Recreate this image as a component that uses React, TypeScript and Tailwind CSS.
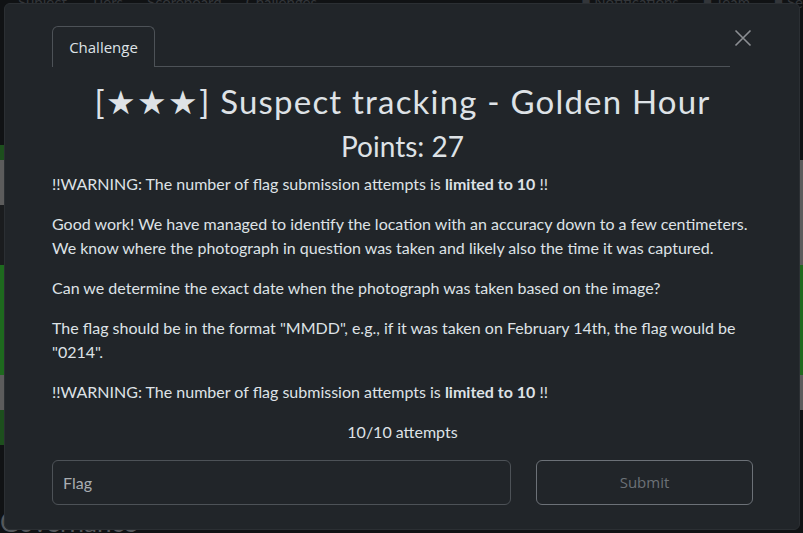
import React from 'react'

const paragraphs = [
    'Good work! We have managed to identify the location with an accuracy down to a few centimeters. We know where the photograph in question was taken and likely also the time it was captured.',
    'Can we determine the exact date when the photograph was taken based on the image?',
    'The flag should be in the format "MMDD", e.g., if it was taken on February 14th, the flag would be "0214".',
]

const Warning = () => (
    <p className="mb-4">
        !!WARNING: The number of flag submission attempts is <b className="font-bold">limited to 10</b> !!
    </p>
)

const App = () => {
    return (
        <div className="relative w-[803px] h-[533px] overflow-hidden bg-[#101214] font-['Lato',sans-serif]">
            {/* page behind the modal */}
            <div className="flex gap-6 pl-[18px] -mt-[9px] text-[15px] text-[#33363a]">
                <span>Subject</span>
                <span>Tiers</span>
                <span>Scoreboard</span>
                <span>Challenges</span>
                <span className="ml-auto">■ Notifications</span>
                <span>■ Team</span>
                <span>■ Se</span>
            </div>
            <div className="absolute left-0 top-[145px] w-[4px] flex flex-col">
                <div className="h-[15px] bg-[#1d4f1d]" />
                <div className="h-[45px] bg-[#5c5c5c]" />
                <div className="h-[60px] bg-[#1a1c1e]" />
                <div className="h-[110px] bg-[#1e6a1e]" />
                <div className="h-[35px] bg-[#5c5c5c]" />
                <div className="h-[35px] bg-[#1d4f1d]" />
            </div>
            <div className="absolute right-0 top-[160px] w-[3px] flex flex-col">
                <div className="h-[105px] bg-[#5c5c5c]" />
                <div className="h-[110px] bg-[#1e6a1e]" />
                <div className="h-[35px] bg-[#5c5c5c]" />
            </div>
            <div className="absolute left-0 top-[503px] text-[26px] text-[#55585c]">Governance</div>

            {/* modal */}
            <div className="absolute left-[4px] top-[3px] w-[796px] h-[527px] bg-[#212529] rounded-[6px] border border-[#2b2f33] pl-[47px] pr-[46px] pt-[22px] text-[#dee2e6]">
                <div className="flex items-start">
                    <div className="flex-1 flex border-b border-[#4d5257]">
                        <div className="h-[41px] w-[103px] flex items-center justify-center border border-b-0 border-[#4d5257] rounded-t-[6px] font-['Open_Sans',sans-serif] text-[15px] -mb-px bg-[#212529]">
                            Challenge
                        </div>
                    </div>
                    <button className="ml-[3px] mt-[2px] w-[20px] h-[20px] flex items-center justify-center text-[#8c8f93]">
                        <svg width="18" height="18" viewBox="0 0 18 18" fill="none" stroke="currentColor" strokeWidth="1.6">
                            <path d="M1.5 1.5 L16.5 16.5 M16.5 1.5 L1.5 16.5" />
                        </svg>
                    </button>
                </div>

                <h1 className="mt-[15px] text-center text-[33px] leading-[38px] tracking-[1.2px]">
                    [★★★] Suspect tracking - Golden Hour
                </h1>
                <h2 className="mt-[9px] text-center text-[28px] leading-[34px]">Points: 27</h2>

                <div className="mt-[9px] text-[16px] leading-[24px]">
                    <Warning />
                    {paragraphs.map((p, i) => (
                        <p key={i} className="mb-4">{p}</p>
                    ))}
                    <Warning />
                    <p className="text-center">10/10 attempts</p>
                </div>

                <div className="mt-4 grid grid-cols-[459px_217px] gap-[25px]">
                    <input
                        placeholder="Flag"
                        className="h-[45px] px-[10px] bg-transparent border border-[#4d5257] rounded-[6px] text-[16px] placeholder:text-[#a9adb1] outline-none"
                    />
                    <button className="h-[45px] border border-[#6c7177] rounded-[6px] font-['Open_Sans',sans-serif] text-[15px] text-[#6c7177]">
                        Submit
                    </button>
                </div>
            </div>
        </div>
    )
}

export default App
